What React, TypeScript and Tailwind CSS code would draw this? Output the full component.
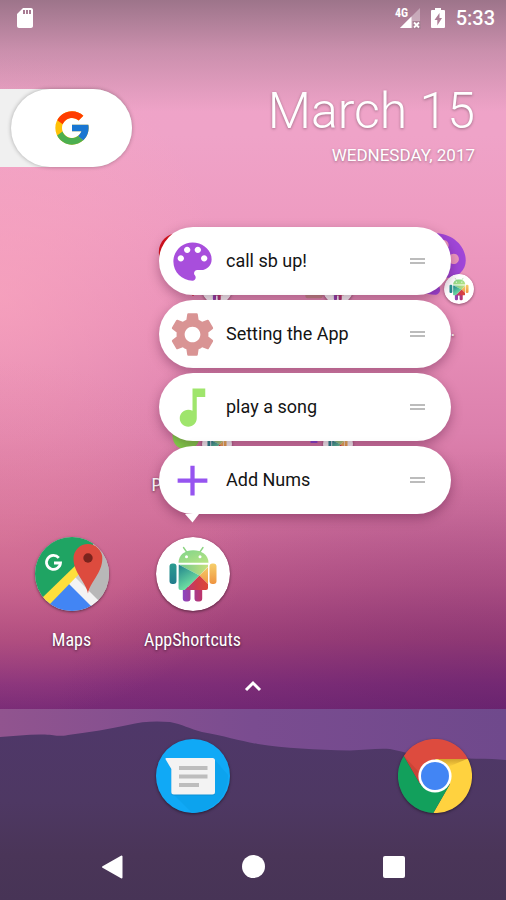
import type { ReactNode } from "react";
import { FcGoogle } from "react-icons/fc";
import { MdAdd, MdFavorite, MdMusicNote, MdSdCard } from "react-icons/md";

const GEAR =
  "M19.43 12.98c.04-.32.07-.64.07-.98s-.03-.66-.07-.98l2.11-1.65c.19-.15.24-.42.12-.64l-2-3.46c-.12-.22-.39-.3-.61-.22l-2.49 1c-.52-.4-1.08-.73-1.69-.98l-.38-2.65C14.46 2.18 14.25 2 14 2h-4c-.25 0-.46.18-.49.42l-.38 2.65c-.61.25-1.17.59-1.69.98l-2.49-1c-.23-.09-.49 0-.61.22l-2 3.46c-.13.22-.07.49.12.64l2.11 1.65c-.04.32-.07.65-.07.98s.03.66.07.98l-2.11 1.65c-.19.15-.24.42-.12.64l2 3.46c.12.22.39.3.61.22l2.49-1c.52.4 1.08.73 1.69.98l.38 2.65c.03.24.24.42.49.42h4c.25 0 .46-.18.49-.42l.38-2.65c.61-.25 1.17-.59 1.69-.98l2.49 1c.23.09.49 0 .61-.22l2-3.46c.12-.22.07-.49-.12-.64l-2.11-1.65zM12 15.7c-2.04 0-3.7-1.66-3.7-3.7s1.66-3.7 3.7-3.7 3.7 1.66 3.7 3.7-1.66 3.7-3.7 3.7z";

const PALETTE =
  "M12 3c-4.97 0-9 4.03-9 9s4.03 9 9 9c.83 0 1.5-.67 1.5-1.5 0-.39-.15-.74-.39-1.01-.23-.26-.38-.61-.38-.99 0-.83.67-1.5 1.5-1.5H16c2.76 0 5-2.24 5-5 0-4.42-4.03-8-9-8zm-5.5 9c-.83 0-1.5-.67-1.5-1.5S5.670 9 6.500 9 8 9.670 8 10.500 7.330 12 6.500 12zm3-4C8.670 8 8 7.330 8 6.500S8.670 5 9.500 5s1.500.67 1.500 1.500S10.330 8 9.500 8zm5 0c-.83 0-1.500-.67-1.500-1.500S13.670 5 14.500 5s1.500.67 1.500 1.500S15.330 8 14.500 8zm3 4c-.83 0-1.500-.67-1.500-1.500S16.670 9 17.500 9s1.500.67 1.500 1.500-.67 1.500-1.500 1.500z";

function Glyph({ path, className }: { path: string; className: string }) {
  return (
    <svg viewBox="0 0 24 24" fill="currentColor" className={className} aria-hidden="true">
      <path d={path} />
    </svg>
  );
}

function AndroidIcon({ className }: { className: string }) {
  return (
    <svg viewBox="0 0 74 74" className={className} aria-hidden="true">
      <defs>
        <linearGradient id="head" x1="0" y1="0" x2="1" y2="1">
          <stop offset="0" stopColor="#7fd38a" />
          <stop offset="1" stopColor="#b8e483" />
        </linearGradient>
        <linearGradient id="teal" x1="0" y1="0" x2="0.5" y2="1">
          <stop offset="0" stopColor="#1d7f8c" />
          <stop offset="0.850" stopColor="#6fe0a2" />
        </linearGradient>
        <linearGradient id="arm" x1="0" y1="0" x2="0" y2="1">
          <stop offset="0" stopColor="#2a9c90" />
          <stop offset="1" stopColor="#227c8c" />
        </linearGradient>
        <linearGradient id="lime" x1="0" y1="0" x2="1" y2="0">
          <stop offset="0" stopColor="#6cc98f" />
          <stop offset="1" stopColor="#cde27a" />
        </linearGradient>
        <linearGradient id="sun" x1="0" y1="0" x2="0" y2="1">
          <stop offset="0" stopColor="#f6cf6b" />
          <stop offset="1" stopColor="#ef9440" />
        </linearGradient>
        <linearGradient id="ember" x1="0" y1="0" x2="1" y2="0">
          <stop offset="0" stopColor="#b03a86" />
          <stop offset="0.5" stopColor="#d03c4c" />
          <stop offset="1" stopColor="#e04a34" />
        </linearGradient>
        <linearGradient id="legs" x1="0" y1="0" x2="1" y2="0">
          <stop offset="0" stopColor="#8c46c0" />
          <stop offset="0.4" stopColor="#9c3ea0" />
          <stop offset="1" stopColor="#bd3468" />
        </linearGradient>
        <clipPath id="torso">
          <path d="M22.5 27.5H52V51a2 2 0 0 1-2 2H24.500a2 2 0 0 1-2-2Z" />
        </clipPath>
      </defs>
      <circle cx="37" cy="37" r="37" fill="#fff" />
      <path d="m27.500 10.500 3.500 5M47 10.500l-3.500 5" stroke="#8cd482" strokeWidth="1.400" strokeLinecap="round" />
      <path d="M22.500 25.800C22.500 18 29 13.300 37.200 13.300S52.500 18 52.500 25.800Z" fill="url(#head)" />
      <circle cx="30.500" cy="19.800" r="1.500" fill="#fff" />
      <circle cx="44" cy="19.800" r="1.500" fill="#fff" />
      <rect x="13.500" y="26.500" width="7" height="20.500" rx="3" fill="url(#arm)" />
      <rect x="53.500" y="26.500" width="7" height="20.500" rx="3" fill="url(#sun)" />
      <path
        d="M26.800 50H46.200V61.500a3 3 0 0 1-3 3h-1.700a3 3 0 0 1-3-3V53h-4v8.500a3 3 0 0 1-3 3h-1.700a3 3 0 0 1-3-3Z"
        fill="url(#legs)"
      />
      <g clipPath="url(#torso)">
        <path d="M22.500 27.500H54L43.500 38.500Z" fill="url(#lime)" />
        <path d="M22.500 27.500 43.500 38.500 27 55H22Z" fill="url(#teal)" />
        <path d="M54 28V49L43.500 38.500Z" fill="url(#sun)" />
        <path d="M43.500 38.500 54 49v6H27Z" fill="url(#ember)" />
      </g>
    </svg>
  );
}

function MapsIcon() {
  return (
    <svg viewBox="0 0 74 74" className="size-[74px]" aria-hidden="true">
      <defs>
        <clipPath id="disc">
          <circle cx="37" cy="37" r="37" />
        </clipPath>
      </defs>
      <g clipPath="url(#disc)">
        <rect width="74" height="74" fill="#cbcbcb" />
        <path d="M53 57 67 10 74 20v54H66Z" fill="#b8b8b8" />
        <path d="M0 0H62L50 24 40 31 9 60H0Z" fill="#1fa463" />
        <path d="M33 44 64 76H0Z" fill="#4285f4" />
        <path d="M32 45 38 38 66 66 59 72Z" fill="#f3f3f3" />
        <path d="M7 61 42 27 46 35 14 68Z" fill="#fedf3c" />
      </g>
      <path
        d="M53 56.500C51 45 38.500 36 38.500 21.500a14.300 14.300 0 0 1 28.800 0C67.300 36 55 45 53 56.500Z"
        fill="#dd4b3e"
      />
      <circle cx="53" cy="21" r="4.700" fill="#7b231d" />
      <path d="M23.800 20.800A7 7 0 1 0 25.500 26H19" fill="none" stroke="#fff" strokeWidth="2.800" />
    </svg>
  );
}

function MessagesIcon() {
  return (
    <svg viewBox="0 0 74 74" className="size-[74px]" aria-hidden="true">
      <circle cx="37" cy="37" r="37" fill="#10a9f6" />
      <path d="m58 20 14 16A37 37 0 0 1 36 74L17 55Z" fill="#0ca3ee" />
      <path
        d="M10.500 19.800H56.500a2.500 2.500 0 0 1 2.500 2.500V54a2.500 2.500 0 0 1-2.500 2.500H17.800a2.500 2.500 0 0 1-2.500-2.500V31Z"
        fill="#0a7fc0"
        opacity="0.5"
      />
      <path
        d="M10.500 19H56.500a2.500 2.500 0 0 1 2.500 2.500V53a2.500 2.500 0 0 1-2.500 2.500H17.800a2.500 2.500 0 0 1-2.500-2.500V30L9.700 20.500A1 1 0 0 1 10.500 19Z"
        fill="#f3f3f3"
      />
      <path d="M23 29h28.500M23 37.500h28.500M23 46h20" stroke="#bdbdbd" strokeWidth="4" />
    </svg>
  );
}

function ChromeIcon() {
  return (
    <svg viewBox="0 0 74 74" className="size-[74px]" aria-hidden="true">
      <defs>
        <linearGradient id="shade" x1="0" y1="0" x2="0" y2="1">
          <stop offset="0" stopColor="#a5741c" stopOpacity="0.5" />
          <stop offset="1" stopColor="#a5741c" stopOpacity="0" />
        </linearGradient>
      </defs>
      <path d="M5.800 17A37 37 0 0 1 69.900 20H37L22.300 45.500Z" fill="#dd4b3e" />
      <path d="M69.900 20A37 37 0 0 1 35.300 74L51.700 45.500 37 20Z" fill="#ffd23f" />
      <path d="M35.300 74A37 37 0 0 1 5.800 17L22.300 45.500H51.700Z" fill="#12a05c" />
      <path d="M40 20H69L50 28Z" fill="url(#shade)" />
      <path d="M5.800 17 20 41.500V32Z" fill="#b23a2e" opacity="0.4" />
      <circle cx="37" cy="37" r="16.600" fill="#fff" />
      <circle cx="37" cy="37" r="14" fill="#4285f4" />
    </svg>
  );
}

function PinnedGlyph({ children }: { children: ReactNode }) {
  return (
    <span className="relative flex size-[74px] items-center justify-center">
      {children}
      <AndroidIcon className="absolute top-[47px] left-[46px] size-[30px] rounded-full shadow-[0_1px_3px_rgba(0,0,0,0.4)]" />
    </span>
  );
}

type AppTileProps = { name: string; label?: string; column: string; icon: ReactNode };

function AppTile({ name, label, column, icon }: AppTileProps) {
  return (
    <button type="button" aria-label={name} className={`flex flex-col items-center gap-[17px] ${column}`}>
      <span className="rounded-full">{icon}</span>
      {label && (
        <span className="font-['Roboto_Condensed','Roboto',sans-serif] text-lg leading-6 whitespace-nowrap text-white [text-shadow:0_1px_3px_rgba(0,0,0,0.6)]">
          {label}
        </span>
      )}
    </button>
  );
}

const shortcuts = [
  { label: "call sb up!", icon: <Glyph path={PALETTE} className="size-[51px] text-[#a84edc]" /> },
  { label: "Setting the App", icon: <Glyph path={GEAR} className="size-[51px] text-[#d99494]" /> },
  { label: "play a song", icon: <MdMusicNote className="size-[51px] text-[#9fe56c]" /> },
  { label: "Add Nums", icon: <MdAdd className="size-[51px] text-[#9654f0]" /> },
];

function ShortcutMenu() {
  return (
    <div className="absolute bottom-[calc(100%+14px)] left-[27px] z-20 w-[292px]">
      <ul className="flex flex-col gap-[5px]">
        {shortcuts.map((s) => (
          <li key={s.label}>
            <button
              type="button"
              className="flex h-[68px] w-full items-center gap-2 rounded-full bg-white pr-[26px] pl-2 text-left shadow-[0_4px_12px_rgba(60,0,40,0.35)]"
            >
              {s.icon}
              <span className="flex-1 text-lg leading-6 text-[#141414]">{s.label}</span>
              <svg viewBox="0 0 15 6" className="h-[6px] w-[15px]" aria-hidden="true">
                <path d="M0 1h15M0 5h15" stroke="#a6a6a6" strokeWidth="1.500" />
              </svg>
            </button>
          </li>
        ))}
      </ul>
      <svg viewBox="0 0 14 9" className="ml-[26px] h-[9px] w-[14px]" aria-hidden="true">
        <path d="M0 0h14L7.500 8.500Z" fill="#fff" />
      </svg>
    </div>
  );
}

function StatusBar() {
  return (
    <header className="flex h-[35px] items-center justify-between pr-[11px] pl-[13px] text-white">
      <MdSdCard className="size-6" title="SD card" />
      <div className="flex items-center gap-[11px]">
        <svg viewBox="0 0 26 20" className="h-5 w-[26px] overflow-visible" aria-label="4G, no data">
          <path d="M6 20 26 0V20Z" fill="#fff" opacity="0.35" />
          <path d="M6 20 17.500 8.500V20Z" fill="#fff" />
          <path d="M18.500 13H27V21H18.500Z" fill="#a98095" />
          <path d="m20 14.500 5 5m0-5-5 5" stroke="#fff" strokeWidth="1.800" />
          <text x="1" y="9" fill="#fff" className="font-['Roboto_Condensed','Roboto',sans-serif] text-[12px] font-bold">
            4G
          </text>
        </svg>
        <svg viewBox="0 0 14 20" className="h-5 w-[14px]" aria-label="Battery charging">
          <path
            d="M4 0h6v2h3a1 1 0 0 1 1 1v16a1 1 0 0 1-1 1H1a1 1 0 0 1-1-1V3a1 1 0 0 1 1-1h3ZM8.500 5 3.500 12H6.300V17.500L11 10H8.500Z"
            fill="#fff"
            fillRule="evenodd"
          />
        </svg>
        <time className="text-xl leading-6 font-medium">5:33</time>
      </div>
    </header>
  );
}

export default function App() {
  return (
    <main className="relative isolate flex min-h-screen flex-col overflow-hidden bg-[linear-gradient(to_bottom,#efa4c8_0%,#efa3c8_15%,#ee9bc1_25%,#e88fb8_36%,#dc80ad_48%,#cf6f9c_57%,#bd5889_65%,#a5437a_71%,#85307a_76%,#772a76_79%,#70276f_100%)] font-['Roboto',sans-serif]">
      <div className="absolute inset-0 -z-10 bg-[radial-gradient(ellipse_45%_28%_at_0%_33%,rgba(252,168,190,0.6),rgba(252,168,190,0))]" />
      <div className="absolute inset-0 -z-10 bg-[radial-gradient(ellipse_50%_20%_at_0%_60%,rgba(232,130,155,0.4),rgba(232,130,155,0))]" />
      <div className="absolute inset-0 -z-10 bg-[radial-gradient(ellipse_90%_32%_at_100%_82%,rgba(80,25,100,0.4),rgba(80,25,100,0))]" />
      <div className="absolute inset-x-0 top-0 -z-10 h-28 bg-[linear-gradient(to_bottom,rgba(60,60,65,0.46),rgba(70,70,75,0.22)_45%,rgba(70,70,75,0))]" />

      <StatusBar />

      <section className="mt-[46px] flex items-start justify-between pr-[31px]">
        <div className="mt-2 flex rounded-r-full bg-[#f0f0f0]">
          <button
            type="button"
            aria-label="Google search"
            className="ml-[11px] flex h-[78px] w-[121px] items-center justify-center rounded-full bg-white shadow-[0_0_4px_rgba(0,0,0,0.3)]"
          >
            <FcGoogle className="size-10" />
          </button>
        </div>
        <div className="text-right text-white [text-shadow:0_1px_3px_rgba(0,0,0,0.35)]">
          <h1 className="text-[50px] leading-[60px] font-light">March 15</h1>
          <p className="mt-1 text-[17px] leading-5">WEDNESDAY, 2017</p>
        </div>
      </section>

      <section className="mt-[60px] grid grid-cols-4 gap-y-10 px-[11px]">
        <AppTile
          name="Like"
          column="col-start-2"
          icon={<PinnedGlyph><MdFavorite className="size-[82px] shrink-0 text-[#d8121c]" /></PinnedGlyph>}
        />
        <AppTile
          name="Setting the App"
          column="col-start-3"
          icon={<PinnedGlyph><Glyph path={GEAR} className="size-[82px] shrink-0 text-[#c98d8d]" /></PinnedGlyph>}
        />
        <AppTile
          name="Call"
          label="Call..."
          column="col-start-4"
          icon={<PinnedGlyph><Glyph path={PALETTE} className="size-[82px] shrink-0 text-[#a046d8]" /></PinnedGlyph>}
        />
        <AppTile
          name="Play a song"
          label="Play a song"
          column="col-start-2"
          icon={<PinnedGlyph><MdMusicNote className="size-[82px] shrink-0 text-[#86d94c]" /></PinnedGlyph>}
        />
        <AppTile
          name="Add Nums"
          column="col-start-3"
          icon={<PinnedGlyph><MdAdd className="size-[82px] shrink-0 text-[#8a48d8]" /></PinnedGlyph>}
        />
        <AppTile
          name="Maps"
          label="Maps"
          column="col-start-1"
          icon={<span className="block rounded-full shadow-[0_1px_3px_rgba(0,0,0,0.5)]"><MapsIcon /></span>}
        />
        <div className="relative flex justify-center">
          <AppTile
            name="AppShortcuts"
            label="AppShortcuts"
            column="w-full"
            icon={<AndroidIcon className="size-[74px] rounded-full shadow-[0_1px_3px_rgba(0,0,0,0.5)]" />}
          />
          <ShortcutMenu />
        </div>
      </section>

      <button type="button" aria-label="All apps" className="mx-auto mt-[26px] mb-3 flex h-4 items-center">
        <svg viewBox="0 0 18 12" className="h-3 w-[18px]" aria-hidden="true">
          <path d="m2 10 7-7 7 7" fill="none" stroke="#fff" strokeWidth="3" />
        </svg>
      </button>

      <footer className="relative mt-auto bg-[linear-gradient(to_right,#91548f,#7a4c90_50%,#6f498c)]">
        <svg
          viewBox="0 0 506 191"
          preserveAspectRatio="none"
          className="absolute inset-0 size-full"
          aria-hidden="true"
        >
          <defs>
            <linearGradient id="hill" x1="0" y1="0" x2="0" y2="1">
              <stop offset="0" stopColor="#4f3769" />
              <stop offset="0.450" stopColor="#4e3863" />
              <stop offset="0.750" stopColor="#4a3558" />
              <stop offset="1" stopColor="#473456" />
            </linearGradient>
          </defs>
          <path
            d="M0 28C15 27 30 25 45 25.500 55 26 58 28 68 26 90 23 110 20 128 16 142 12 158 12 170 13 182 15 190 20 202 23 225 27 240 32 258 35 285 39 315 41 350 41.500 365 41 378 39 390 40 405 43 420 48 440 49 465 50 490 49 506 51V191H0Z"
            fill="url(#hill)"
          />
        </svg>
        <div className="relative grid grid-cols-4 justify-items-center px-[11px] pt-[30px] pb-5">
          <button type="button" aria-label="Messages" className="col-start-2 rounded-full shadow-[0_1px_3px_rgba(0,0,0,0.5)]">
            <MessagesIcon />
          </button>
          <button type="button" aria-label="Chrome" className="col-start-4 rounded-full shadow-[0_1px_3px_rgba(0,0,0,0.5)]">
            <ChromeIcon />
          </button>
        </div>
        <nav className="relative flex h-[67px] justify-center">
          <button type="button" aria-label="Back" className="flex w-[141px] items-center justify-center">
            <svg viewBox="0 0 24 24" className="size-6" aria-hidden="true">
              <path d="M21.500 1.500v21L3 12Z" fill="#fff" stroke="#fff" strokeWidth="2" strokeLinejoin="round" />
            </svg>
          </button>
          <button type="button" aria-label="Home" className="flex w-[141px] items-center justify-center">
            <span className="size-[23px] rounded-full bg-white" />
          </button>
          <button type="button" aria-label="Recent apps" className="flex w-[141px] items-center justify-center">
            <span className="size-[22px] rounded-xs bg-white" />
          </button>
        </nav>
      </footer>
    </main>
  );
}
